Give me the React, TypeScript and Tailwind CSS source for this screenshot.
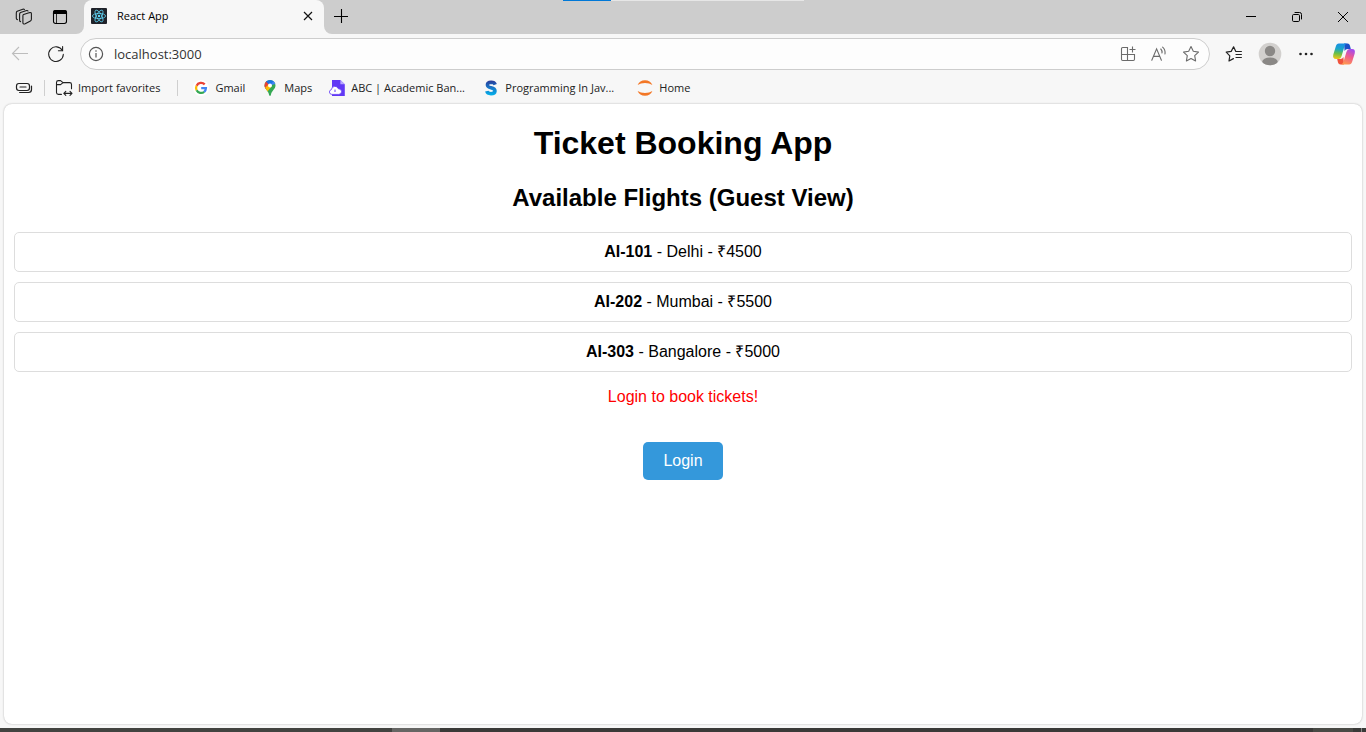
import type { ReactNode } from "react";

const flights = [
  { id: "AI-101", city: "Delhi", price: 4500 },
  { id: "AI-202", city: "Mumbai", price: 5500 },
  { id: "AI-303", city: "Bangalore", price: 5000 },
];

function IconButton({ label, children, className = "" }: { label: string; children: ReactNode; className?: string }) {
  return (
    <button type="button" aria-label={label} className={`flex shrink-0 items-center justify-center ${className}`}>
      {children}
    </button>
  );
}

function WorkspacesIcon() {
  return (
    <svg width="18" height="18" viewBox="0 0 18 18" fill="none" stroke="#1b1b1b" strokeWidth="1.1" strokeLinejoin="round" strokeLinecap="round">
      <path d="M8.6 6.6 L14.8 4.6 Q16.4 4.3 16.4 5.8 V11.2 Q16.4 12.4 15.4 12.9 L10.2 15.8 Q8.4 16.6 7.9 15 V8 Q7.8 7 8.6 6.6 Z" />
      <path d="M5.6 13.6 Q4.6 13.5 4.6 12.2 V6.2 Q4.6 5 5.6 4.5 L11.6 2.5 Q12.6 2.3 13 3" />
      <path d="M2.4 11.6 Q1.3 11.3 1.3 10.2 V5 Q1.3 3.8 2.2 3.3 L7.8 1.2 Q9 .9 9.4 1.6" />
    </svg>
  );
}

function TabActionsIcon() {
  return (
    <svg width="16" height="16" viewBox="0 0 16 16" fill="none" stroke="#000" strokeWidth="1.1">
      <rect x="1.5" y="1.5" width="13" height="13" rx="2.2" />
      <path d="M1.5 4.4 V3.4 Q1.5 1.5 3.4 1.5 H12.6 Q14.5 1.5 14.5 3.4 V4.4 Z" fill="#000" />
      <path d="M4.5 5 V14.5" strokeWidth=".8" />
    </svg>
  );
}

function ReactFavicon() {
  return (
    <svg width="16" height="16" viewBox="0 0 16 16" fill="none" stroke="#61dafb" strokeWidth=".75">
      <rect width="16" height="16" rx="1" fill="#20232a" stroke="none" />
      <ellipse cx="8" cy="8" rx="6.6" ry="2.6" />
      <ellipse cx="8" cy="8" rx="6.6" ry="2.6" transform="rotate(60 8 8)" />
      <ellipse cx="8" cy="8" rx="6.6" ry="2.6" transform="rotate(120 8 8)" />
      <circle cx="8" cy="8" r="1.2" fill="#61dafb" stroke="none" />
    </svg>
  );
}

function CloseIcon() {
  return (
    <svg width="10" height="10" viewBox="0 0 10 10" stroke="#111" strokeWidth="1.2">
      <path d="M1 1 L9 9 M9 1 L1 9" />
    </svg>
  );
}

function PlusIcon() {
  return (
    <svg width="14" height="14" viewBox="0 0 14 14" stroke="#000" strokeWidth="1.1">
      <path d="M7.5 0 V14 M0 7.5 H14" />
    </svg>
  );
}

function BackIcon() {
  return (
    <svg width="18" height="16" viewBox="0 0 18 16" fill="none" stroke="#bdbdbd" strokeWidth="1.1">
      <path d="M1.5 7.5 H17 M8 1 L1.5 7.5 L8 14" />
    </svg>
  );
}

function RefreshIcon() {
  return (
    <svg width="18" height="18" viewBox="0 0 18 18" fill="none" stroke="#222" strokeWidth="1.1" strokeLinecap="round">
      <path d="M15.4 5.6 A7.3 7.3 0 1 0 16.3 9.4" />
      <path d="M15.6 1.6 V5.8 H11.4" />
    </svg>
  );
}

function InfoIcon() {
  return (
    <svg width="16" height="16" viewBox="0 0 16 16" fill="none" stroke="#555" strokeWidth="1.2">
      <circle cx="8" cy="8" r="6.6" />
      <path d="M8 7 V11.4" />
      <circle cx="8" cy="5" r=".8" fill="#555" stroke="none" />
    </svg>
  );
}

function AppsIcon() {
  return (
    <svg width="16" height="16" viewBox="0 0 16 16" fill="none" stroke="#6b6b6b" strokeWidth="1.1">
      <path d="M7.5 1.5 H2.7 Q1.5 1.5 1.5 2.7 V13.3 Q1.5 14.5 2.7 14.5 H13.3 Q14.5 14.5 14.5 13.3 V8.5 H1.5 M7.5 1 V14.5" />
      <path d="M12.5 .5 V6.5 M9.5 3.5 H15.5" />
    </svg>
  );
}

function ReadAloudIcon() {
  return (
    <svg width="18" height="16" viewBox="0 0 18 16" fill="none" stroke="#6b6b6b" strokeWidth="1.1" strokeLinecap="round">
      <path d="M1.8 14.2 L6.6 2.8 L11.4 14.2 M3.4 10.4 H9.8" />
      <path d="M10.8 3 Q12.3 4.6 12 7" />
      <path d="M12.6 1.2 Q15.6 3.8 15 8" />
    </svg>
  );
}

function StarIcon() {
  return (
    <svg width="18" height="18" viewBox="0 0 18 18" fill="none" stroke="#6b6b6b" strokeWidth="1.1" strokeLinejoin="round">
      <path d="M9 1.6 L11.3 6.3 L16.5 7.1 L12.7 10.7 L13.6 15.9 L9 13.5 L4.4 15.9 L5.3 10.7 L1.5 7.1 L6.7 6.3 Z" />
    </svg>
  );
}

function FavoritesIcon() {
  return (
    <svg width="18" height="18" viewBox="0 0 18 18" fill="none" stroke="#222" strokeWidth="1.2" strokeLinejoin="round" strokeLinecap="round">
      <path d="M16.4 6.5 H10.8 L8.6 1.8 L6.2 6.4 L1.2 7.2 L4.8 10.8 L4 16 L8.4 13.6" />
      <path d="M11 9.5 H16.4 M11 12.5 H16.4" />
    </svg>
  );
}

function AvatarIcon() {
  return (
    <svg width="24" height="24" viewBox="0 0 24 24">
      <defs>
        <clipPath id="avatar">
          <circle cx="12" cy="12" r="11.3" />
        </clipPath>
      </defs>
      <g clipPath="url(#avatar)">
        <rect width="24" height="24" fill="#d2d0ce" />
        <circle cx="12" cy="9" r="5.2" fill="#8a8886" />
        <ellipse cx="12" cy="20" rx="7.8" ry="4.6" fill="#8a8886" />
      </g>
    </svg>
  );
}

function CopilotIcon() {
  return (
    <svg width="24" height="22" viewBox="0 0 24 22">
      <defs>
        <linearGradient id="cp-left" x1=".4" y1="0" x2=".3" y2="1">
          <stop offset="0" stopColor="#1a8fe6" />
          <stop offset=".35" stopColor="#1aa6c8" />
          <stop offset=".65" stopColor="#6cbf45" />
          <stop offset="1" stopColor="#f5c518" />
        </linearGradient>
        <linearGradient id="cp-right" x1=".7" y1="0" x2=".3" y2="1">
          <stop offset="0" stopColor="#a24bf0" />
          <stop offset=".45" stopColor="#ee5a8f" />
          <stop offset="1" stopColor="#ff9a4d" />
        </linearGradient>
      </defs>
      <path d="M12 .5 H15.6 Q17.4 .5 17.9 2.4 L18.8 6 H15.6 Q13.4 6 12.6 8 Z" fill="#1b50c8" />
      <path d="M12 21.5 H8.4 Q6.6 21.5 6 19.4 L5.2 16 H8.4 Q10.6 16 11.4 14 Z" fill="#f0523c" />
      <path d="M6.8 .5 H15 Q13.2 .9 12.5 3.2 L9.6 13 Q8.8 16 6.4 16 H4 Q.3 16 1.3 11.6 L3.7 3.8 Q4.6 .5 6.8 .5 Z" fill="url(#cp-left)" />
      <path d="M17.2 21.5 H9 Q10.8 21 11.5 18.8 L14.4 9 Q15.3 6 17.6 6 H20 Q23.7 6 22.7 10.4 L20.3 18.2 Q19.3 21.5 17.2 21.5 Z" fill="url(#cp-right)" />
    </svg>
  );
}

function SidebarCardIcon() {
  return (
    <svg width="18" height="14" viewBox="0 0 18 14" fill="none" stroke="#222" strokeWidth="1.2" strokeLinecap="round">
      <rect x="1.5" y="2.5" width="13" height="7" rx="2.4" />
      <path d="M5 6 H11" />
      <path d="M16.5 5 V8.6 Q16.5 11.5 13.6 11.5 H4.6" />
    </svg>
  );
}

function ImportFolderIcon() {
  return (
    <svg width="18" height="18" viewBox="0 0 18 18" fill="none" stroke="#222" strokeWidth="1.1" strokeLinejoin="round" strokeLinecap="round">
      <path d="M6.4 15.4 H3.4 Q1.5 15.4 1.5 13.6 V3.4 Q1.5 1.6 3.4 1.6 H5.6 L8 3.6 H14.6 Q16.5 3.6 16.5 5.4 V9.8" />
      <path d="M1.5 5.6 H5.6 L8 3.6" />
      <path d="M9 14.4 H16.8 M10.8 12.4 L8.8 14.4 L10.8 16.4 M15 12.4 L17 14.4 L15 16.4" />
    </svg>
  );
}

function GoogleIcon() {
  return (
    <svg width="16" height="16" viewBox="0 0 16 16">
      <circle cx="8" cy="8" r="8" fill="#fff" />
      <g fill="none" strokeWidth="2.3">
        <path d="M11.7 4.4 A5 5 0 0 0 3.6 5.7" stroke="#ea4335" />
        <path d="M3.6 5.7 A5 5 0 0 0 3.6 10.3" stroke="#fbbc05" />
        <path d="M3.6 10.3 A5 5 0 0 0 11.2 11.8" stroke="#34a853" />
        <path d="M11.2 11.8 A5 5 0 0 0 12.9 8.2 H8.2" stroke="#4285f4" />
      </g>
    </svg>
  );
}

function MapsIcon() {
  return (
    <svg width="16" height="16" viewBox="0 0 16 16">
      <defs>
        <clipPath id="pin">
          <path d="M8 0 A5.5 5.5 0 0 1 13.5 5.5 C13.5 9.3 9.4 10.8 8.8 15.2 Q8 16.6 7.2 15.2 C6.6 10.8 2.5 9.3 2.5 5.5 A5.5 5.5 0 0 1 8 0 Z" />
        </clipPath>
      </defs>
      <g clipPath="url(#pin)">
        <rect width="16" height="16" fill="#34a853" />
        <path d="M0 12 L14 -3 L16 3 L8 5.5 Z" fill="#4285f4" />
        <path d="M0 0 H4.3 L8 5 L4 9 L0 6 Z" fill="#ea4335" />
        <path d="M4.2 1.8 L8 5.4 L14 -2 H4 Z" fill="#1a73e8" />
        <path d="M2.4 8.6 L7 4 L9.4 6.8 L5 12 Z" fill="#fbbc04" />
      </g>
      <circle cx="8" cy="5.5" r="2" fill="#fff" />
    </svg>
  );
}

function AbcIcon() {
  return (
    <svg width="16" height="16" viewBox="0 0 16 16">
      <path d="M3 0 H11.4 L15.8 4.2 V16 H3 Z" fill="#6138f5" />
      <path d="M11.4 0 V4.2 H15.8 Z" fill="#b9a8ff" />
      <path d="M2.8 14.4 Q.4 14.2 .4 12 Q.5 10 2.4 9.6 Q2.6 6.6 5.8 6.3 Q8.6 6.3 9.4 8.8 Q12.4 8.6 12.6 11.6 Q12.5 14.3 9.8 14.4 Z" fill="#fff" stroke="#6138f5" strokeWidth=".8" />
      <path d="M6 9.6 V12" stroke="#6138f5" />
    </svg>
  );
}

function ScalerIcon() {
  return (
    <svg width="16" height="16" viewBox="0 0 16 16" fill="none">
      <defs>
        <linearGradient id="s-fill" x1="0" y1="0" x2="0" y2="16" gradientUnits="userSpaceOnUse">
          <stop offset="0" stopColor="#2a3594" />
          <stop offset=".5" stopColor="#1879c9" />
          <stop offset="1" stopColor="#00b7ee" />
        </linearGradient>
      </defs>
      <path d="M12.2 4.6 Q11.4 2.3 8.2 2.3 Q4.4 2.4 4.4 5 Q4.5 7.1 8 7.8 Q12 8.6 12 11 Q11.8 13.7 8 13.7 Q4.4 13.7 3.8 11.2" stroke="url(#s-fill)" strokeWidth="3.5" />
    </svg>
  );
}

function JupyterIcon() {
  return (
    <svg width="16" height="16" viewBox="0 0 16 16" fill="#f37726">
      <path d="M.6 5 Q2.6 .2 8 .2 Q13.4 .2 15.4 5 Q12.4 2.9 8 2.9 Q3.6 2.9 .6 5 Z" />
      <path d="M.6 11 Q2.6 15.8 8 15.8 Q13.4 15.8 15.4 11 Q12.4 13.1 8 13.1 Q3.6 13.1 .6 11 Z" />
    </svg>
  );
}

const bookmarks = [
  { label: "Gmail", icon: <GoogleIcon />, width: "" },
  { label: "Maps", icon: <MapsIcon />, width: "" },
  { label: "ABC | Academic Ban...", icon: <AbcIcon />, width: "w-[137px]" },
  { label: "Programming In Jav...", icon: <ScalerIcon />, width: "w-[137px]" },
  { label: "Home", icon: <JupyterIcon />, width: "" },
];

function TabStrip() {
  return (
    <div className="flex h-[34px]">
      <div className="flex w-[84px] shrink-0 items-center gap-[19px] rounded-br-lg bg-[#cdcdcd] pl-[15px]">
        <IconButton label="Workspaces"><WorkspacesIcon /></IconButton>
        <IconButton label="Tab actions menu"><TabActionsIcon /></IconButton>
      </div>
      <div className="w-60 shrink-0 bg-[#cdcdcd]">
        <div className="flex h-full items-center rounded-t-lg bg-[#f7f7f7] pr-[11px] pb-[2px] pl-[7px]">
          <ReactFavicon />
          <span className="ml-[10px] grow text-black">React App</span>
          <IconButton label="Close tab"><CloseIcon /></IconButton>
        </div>
      </div>
      <div className="flex grow items-start rounded-bl-lg bg-[#cdcdcd]">
        <IconButton label="New tab" className="ml-[10px] h-[31px] w-[14px]"><PlusIcon /></IconButton>
        <div className="grow" />
        <div className="flex h-[33px] items-center">
          <IconButton label="Minimize" className="h-full w-[46px]">
            <svg width="10" height="10" viewBox="0 0 10 10" stroke="#000"><path d="M0 4.5 H10" /></svg>
          </IconButton>
          <IconButton label="Restore" className="h-full w-[46px]">
            <svg width="10" height="10" viewBox="0 0 10 10" fill="none" stroke="#000">
              <rect x=".5" y="2.5" width="7" height="7" rx="1.2" />
              <path d="M2.6 .5 H7.6 Q9.5 .5 9.5 2.4 V7.4" />
            </svg>
          </IconButton>
          <IconButton label="Close" className="h-full w-[46px]">
            <svg width="10" height="10" viewBox="0 0 10 10" stroke="#000"><path d="M0 0 L10 10 M10 0 L0 10" /></svg>
          </IconButton>
        </div>
      </div>
    </div>
  );
}

function Toolbar() {
  return (
    <div className="flex h-10 items-center pr-[10px] pl-[11px]">
      <IconButton label="Back"><BackIcon /></IconButton>
      <IconButton label="Refresh" className="ml-[18px]"><RefreshIcon /></IconButton>
      <div className="ml-[15px] flex h-8 grow items-center rounded-full border border-[#cdcdcd] bg-[#fdfdfd] pr-[9px] pl-[7px]">
        <IconButton label="Site information"><InfoIcon /></IconButton>
        <input
          aria-label="Address"
          defaultValue="localhost:3000"
          className="ml-[10px] min-w-0 grow bg-transparent text-[13px] text-[#333] outline-none"
        />
        <div className="flex items-center gap-[14px]">
          <IconButton label="App available"><AppsIcon /></IconButton>
          <IconButton label="Read aloud"><ReadAloudIcon /></IconButton>
          <IconButton label="Add to favorites"><StarIcon /></IconButton>
        </div>
      </div>
      <IconButton label="Favorites" className="ml-[15px]"><FavoritesIcon /></IconButton>
      <IconButton label="Profile" className="ml-[15px]"><AvatarIcon /></IconButton>
      <IconButton label="Settings and more" className="ml-[17px]">
        <svg width="14" height="4" viewBox="0 0 14 4" fill="#222">
          <circle cx="1.5" cy="2" r="1.3" /><circle cx="7" cy="2" r="1.3" /><circle cx="12.5" cy="2" r="1.3" />
        </svg>
      </IconButton>
      <IconButton label="Copilot" className="ml-[19px]"><CopilotIcon /></IconButton>
    </div>
  );
}

function BookmarksBar() {
  return (
    <nav aria-label="Favorites bar" className="flex h-[29px] items-center pb-[2px] pl-[15px] text-[#222]">
      <IconButton label="Saved cards"><SidebarCardIcon /></IconButton>
      <div className="ml-[11px] h-4 w-px bg-[#cfcfcf]" />
      <button type="button" className="ml-[10px] flex items-center gap-[5px] whitespace-nowrap">
        <ImportFolderIcon />
        Import favorites
      </button>
      <div className="ml-[17px] h-4 w-px bg-[#cfcfcf]" />
      <div className="ml-[15px] flex gap-[17px]">
        {bookmarks.map((b) => (
          <a key={b.label} href="#" className={`flex items-center gap-[6px] whitespace-nowrap ${b.width}`}>
            {b.icon}
            {b.label}
          </a>
        ))}
      </div>
    </nav>
  );
}

export default function App() {
  return (
    <div className="flex h-screen flex-col bg-[#f7f7f7] font-['Open_Sans','Noto_Sans',sans-serif] text-[11px] leading-4">
      <header className="relative">
        <TabStrip />
        <Toolbar />
        <BookmarksBar />
        <div className="absolute top-0 left-[563px] flex h-px w-[241px] bg-[#e6e6e6]">
          <div className="w-12 bg-[#0078d7]" />
        </div>
      </header>

      <main className="mx-1 mt-px min-h-0 grow overflow-auto rounded-lg bg-white px-[10px] pt-5 text-center font-['Liberation_Sans',Arial,sans-serif] text-base leading-[18px] text-black shadow-[0_0_2px_rgba(0,0,0,0.3)]">
        <h1 className="text-[32px] leading-[38px] font-bold">Ticket Booking App</h1>
        <h2 className="mt-[22px] text-2xl leading-7 font-bold">Available Flights (Guest View)</h2>
        <ul className="mt-5 flex flex-col gap-[10px]">
          {flights.map((f) => (
            <li key={f.id} className="rounded-[5px] border border-[#dddddd] p-[10px]">
              <strong>{f.id}</strong> - {f.city} - ₹{f.price}
            </li>
          ))}
        </ul>
        <p className="mt-4 text-[#ff0000]">Login to book tickets!</p>
        <button type="button" className="mt-9 rounded-[5px] bg-[#3498db] px-5 py-[10px] text-white">
          Login
        </button>
      </main>

      <footer className="mt-1 flex h-1 shrink-0 bg-[#3a3a38]">
        <div className="w-[392px] bg-[#424340]" />
        <div className="w-12 bg-[#666664]" />
        <div className="grow" />
        <div className="w-10 bg-[#494a45]" />
        <div className="w-2" />
        <div className="mr-1 w-px bg-[#8a8a88]" />
      </footer>
    </div>
  );
}
